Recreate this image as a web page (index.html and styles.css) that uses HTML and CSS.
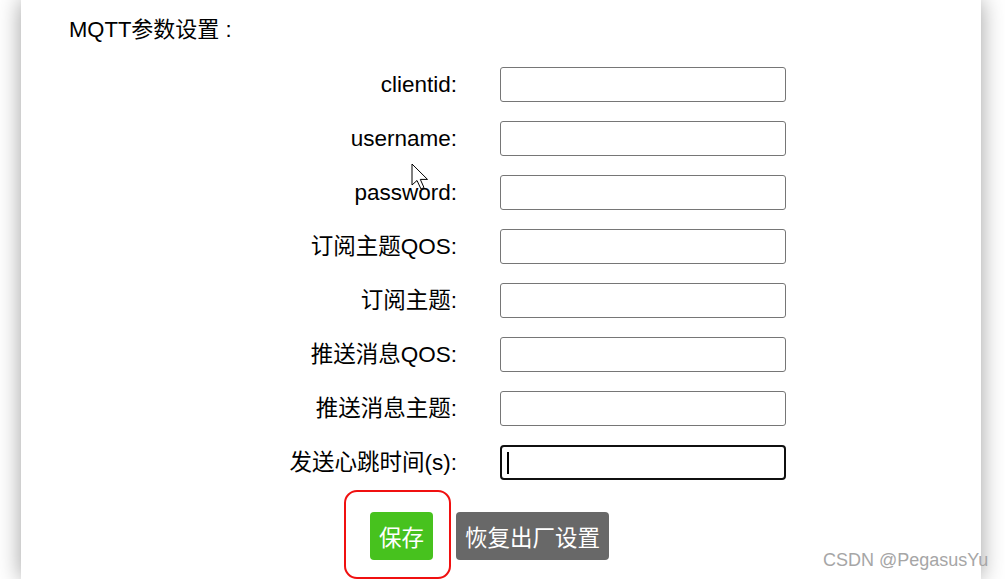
FILE: index.html
```html
<!DOCTYPE html>
<html lang="zh">
<head>
<meta charset="utf-8">
<title>MQTT参数设置</title>
<link rel="stylesheet" href="styles.css">
</head>
<body>
<div class="page">
  <div class="title">MQTT参数设置 :</div>
  <form class="form">
    <label class="lbl" for="f1">clientid:</label>
    <input class="inp" id="f1" type="text">
    <label class="lbl" for="f2">username:</label>
    <input class="inp" id="f2" type="text">
    <label class="lbl" for="f3">password:</label>
    <input class="inp" id="f3" type="password">
    <label class="lbl" for="f4">订阅主题QOS:</label>
    <input class="inp" id="f4" type="text">
    <label class="lbl" for="f5">订阅主题:</label>
    <input class="inp" id="f5" type="text">
    <label class="lbl" for="f6">推送消息QOS:</label>
    <input class="inp" id="f6" type="text">
    <label class="lbl" for="f7">推送消息主题:</label>
    <input class="inp" id="f7" type="text">
    <label class="lbl" for="f8">发送心跳时间(s):</label>
    <span class="focus-wrap"><input class="inp inp-focus" id="f8" type="text"><span class="caret"></span></span>
  </form>
  <div class="actions">
    <button class="btn btn-save" type="button">保存</button>
    <button class="btn btn-reset" type="button">恢复出厂设置</button>
  </div>
</div>
<div class="mark"></div>
<div class="watermark">CSDN @PegasusYu</div>
<svg class="cursor" width="20" height="28" viewBox="0 0 20 28"><path d="M1 1 L1 22 L6 17.5 L10 26 L13 24.6 L9.3 16.4 L16.5 16.4 Z" fill="#fff" stroke="#000" stroke-width="1" stroke-linejoin="miter"/></svg>
</body>
</html>
```

FILE: styles.css
```css
html, body {
  margin: 0;
  padding: 0;
  background: #ffffff;
  overflow: hidden;
}
body {
  width: 1005px;
  height: 579px;
  position: relative;
  font-family: "Liberation Sans", Arial, "Noto Sans CJK SC", sans-serif;
  color: #000;
}
.page {
  margin-left: 21px;
  width: 960px;
  height: 579px;
  background: #fff;
  box-shadow: 0 0 22px rgba(0, 0, 0, 0.38);
  box-sizing: border-box;
  padding-top: 17px;
}
.title {
  font-size: 22px;
  line-height: 26px;
  height: 26px;
  padding-left: 48px;
}
.form {
  margin: 24px 0 0 0;
  display: grid;
  grid-template-columns: 436px 286px;
  grid-auto-rows: 35px;
  column-gap: 43px;
  row-gap: 19px;
}
.lbl {
  font-size: 22.5px;
  line-height: 35px;
  text-align: right;
  white-space: nowrap;
}
.inp {
  box-sizing: border-box;
  width: 286px;
  height: 35px;
  margin: 0;
  border: 1px solid #767676;
  border-radius: 3px;
  background: #fff;
  outline: none;
  padding: 0 6px;
  font-size: 18px;
}
.focus-wrap {
  position: relative;
  display: block;
  width: 286px;
  height: 35px;
}
.inp-focus {
  border: 2px solid #101010;
  border-radius: 4px;
}
.caret {
  position: absolute;
  left: 7px;
  top: 7px;
  width: 2px;
  height: 22px;
  background: #000;
}
.actions {
  margin-top: 32px;
  padding-left: 349px;
  display: flex;
  gap: 23px;
}
.btn {
  height: 48px;
  border: none;
  border-radius: 4px;
  color: #fff;
  font-family: "Liberation Sans", Arial, "Noto Sans CJK SC", sans-serif;
  font-size: 22.5px;
  padding: 0 8px;
  margin: 0;
  cursor: pointer;
}
.btn-save {
  background: #47c21e;
  width: 63px;
}
.btn-reset {
  background: #686868;
  width: 153px;
}
.mark {
  position: absolute;
  left: 344px;
  top: 490px;
  width: 107px;
  height: 89px;
  box-sizing: border-box;
  border: 2px solid #f01010;
  border-radius: 13px;
}
.watermark {
  position: absolute;
  left: 823px;
  top: 549px;
  font-size: 18px;
  line-height: 22px;
  color: #a6a6a6;
  white-space: nowrap;
}
.cursor {
  position: absolute;
  left: 411px;
  top: 163px;
}
```
